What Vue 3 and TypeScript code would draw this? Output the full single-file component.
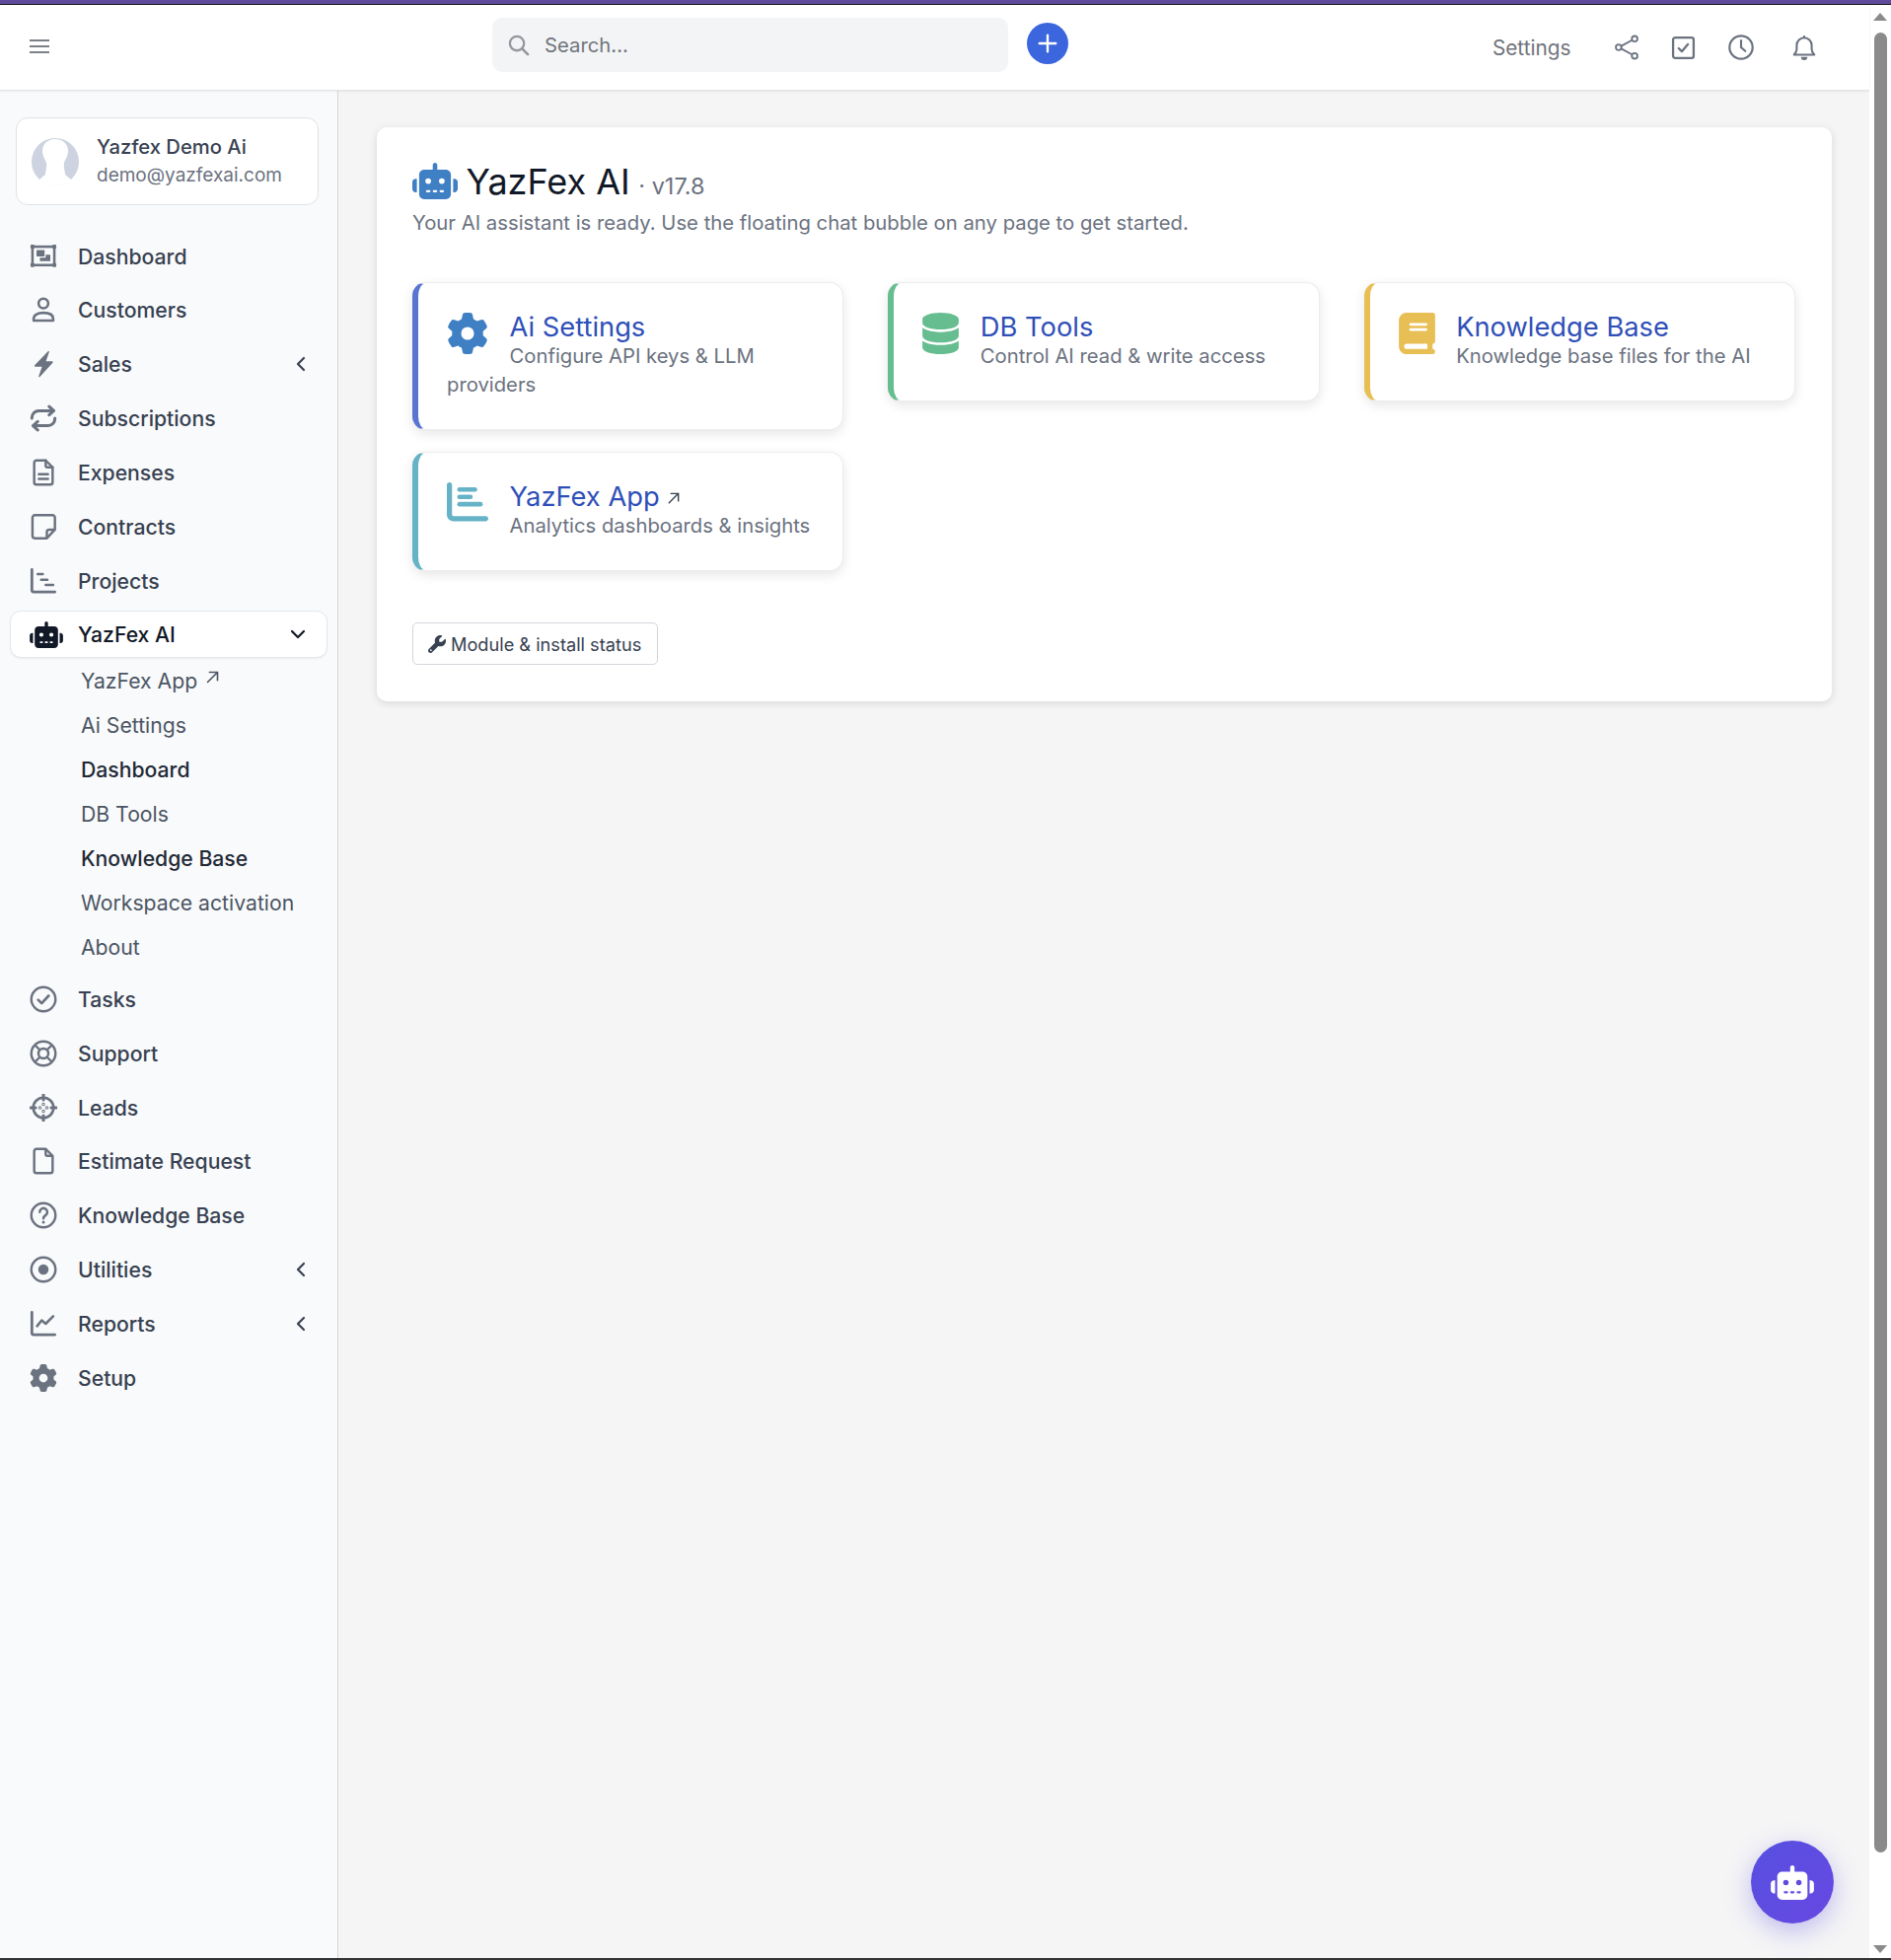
<template>
  <div class="page">
    <svg class="sprite" width="0" height="0" aria-hidden="true">
      <symbol id="i-robot" viewBox="0 0 640 512"><path fill="currentColor" d="M320 0c17.7 0 32 14.3 32 32V96H472c39.8 0 72 32.2 72 72V440c0 39.8-32.2 72-72 72H168c-39.8 0-72-32.2-72-72V168c0-39.8 32.2-72 72-72H288V32c0-17.7 14.3-32 32-32zM208 384c-8.8 0-16 7.2-16 16s7.2 16 16 16h32c8.8 0 16-7.2 16-16s-7.2-16-16-16H208zm96 0c-8.8 0-16 7.2-16 16s7.2 16 16 16h32c8.8 0 16-7.2 16-16s-7.2-16-16-16H304zm96 0c-8.8 0-16 7.2-16 16s7.2 16 16 16h32c8.8 0 16-7.2 16-16s-7.2-16-16-16H400zM264 256a40 40 0 1 0 -80 0 40 40 0 1 0 80 0zm152 40a40 40 0 1 0 0-80 40 40 0 1 0 0 80zM48 224H64V416H48c-26.5 0-48-21.5-48-48V272c0-26.5 21.5-48 48-48zm544 0c26.5 0 48 21.5 48 48v96c0 26.5-21.5 48-48 48H576V224h16z"/></symbol>
      <symbol id="i-gear" viewBox="0 0 512 512"><path fill="currentColor" d="M495.9 166.6c3.2 8.7 .5 18.4-6.4 24.6l-43.3 39.4c1.1 8.3 1.7 16.8 1.7 25.4s-.6 17.1-1.7 25.4l43.3 39.4c6.9 6.2 9.6 15.9 6.4 24.6c-4.4 11.9-9.7 23.3-15.8 34.3l-4.7 8.1c-6.6 11-14 21.4-22.1 31.2c-5.9 7.2-15.7 9.6-24.5 6.8l-55.7-17.7c-13.4 10.3-28.2 18.9-44 25.4l-12.5 57.1c-2 9.1-9 16.3-18.2 17.8c-13.8 2.3-28 3.5-42.5 3.5s-28.7-1.2-42.5-3.5c-9.2-1.5-16.2-8.7-18.2-17.8l-12.5-57.1c-15.8-6.5-30.6-15.1-44-25.4L83.1 425.9c-8.8 2.8-18.6 .3-24.5-6.8c-8.1-9.8-15.5-20.2-22.1-31.2l-4.7-8.1c-6.1-11-11.4-22.4-15.8-34.3c-3.2-8.7-.5-18.4 6.4-24.6l43.3-39.4C64.6 273.1 64 264.6 64 256s.6-17.1 1.7-25.4L22.4 191.2c-6.9-6.2-9.6-15.9-6.4-24.6c4.4-11.9 9.7-23.3 15.8-34.3l4.7-8.1c6.6-11 14-21.4 22.1-31.2c5.9-7.2 15.7-9.6 24.5-6.8l55.7 17.7c13.4-10.3 28.2-18.9 44-25.4l12.5-57.1c2-9.1 9-16.3 18.2-17.8C227.3 1.2 241.5 0 256 0s28.7 1.2 42.5 3.5c9.2 1.5 16.2 8.7 18.2 17.8l12.5 57.1c15.8 6.5 30.6 15.1 44 25.4l55.7-17.7c8.8-2.8 18.6-.3 24.5 6.8c8.1 9.8 15.5 20.2 22.1 31.2l4.7 8.1c6.1 11 11.4 22.4 15.8 34.3zM256 336a80 80 0 1 0 0-160 80 80 0 1 0 0 160z"/></symbol>
      <symbol id="i-database" viewBox="0 0 448 512"><path fill="currentColor" d="M448 80v48c0 44.2-100.3 80-224 80S0 172.2 0 128V80C0 35.8 100.3 0 224 0S448 35.8 448 80zM393.2 214.7c20.8-7.4 39.9-16.9 54.8-28.6V288c0 44.2-100.3 80-224 80S0 332.2 0 288V186.1c14.9 11.8 34 21.2 54.8 28.6C99.7 230.7 159.5 240 224 240s124.3-9.3 169.2-25.3zM0 346.1c14.9 11.8 34 21.2 54.8 28.6C99.7 390.7 159.5 400 224 400s124.3-9.3 169.2-25.3c20.8-7.4 39.9-16.9 54.8-28.6V432c0 44.2-100.3 80-224 80S0 476.2 0 432V346.1z"/></symbol>
      <symbol id="i-book" viewBox="0 0 448 512"><path fill="currentColor" d="M96 0C43 0 0 43 0 96V416c0 53 43 96 96 96H384h32c17.7 0 32-14.3 32-32s-14.3-32-32-32V384c17.7 0 32-14.3 32-32V32c0-17.7-14.3-32-32-32H384 96zm0 384H352v64H96c-17.7 0-32-14.3-32-32s14.3-32 32-32zm32-240c0-8.8 7.2-16 16-16H336c8.8 0 16 7.2 16 16s-7.2 16-16 16H144c-8.8 0-16-7.2-16-16zm16 48H336c8.8 0 16 7.2 16 16s-7.2 16-16 16H144c-8.8 0-16-7.2-16-16s7.2-16 16-16z"/></symbol>
      <symbol id="i-bars" viewBox="0 0 512 512"><g fill="currentColor"><path d="M32 0c17.7 0 32 14.3 32 32V400c0 8.8 7.2 16 16 16H480c17.7 0 32 14.3 32 32s-14.3 32-32 32H80c-44.2 0-80-35.800-80-80V32C0 14.3 14.3 0 32 0z"/><rect x="128" y="60" width="248" height="56" rx="28"/><rect x="128" y="152" width="192" height="56" rx="28"/><rect x="128" y="240" width="316" height="60" rx="30"/></g></symbol>
      <symbol id="i-wrench" viewBox="0 0 512 512"><path fill="currentColor" d="M352 320c88.4 0 160-71.6 160-160c0-15.3-2.2-30.1-6.2-44.2c-3.1-10.8-16.4-13.2-24.3-5.3l-76.8 76.8c-3 3-7.1 4.7-11.3 4.7H336c-8.8 0-16-7.2-16-16V118.6c0-4.2 1.7-8.3 4.7-11.3l76.8-76.8c7.9-7.9 5.4-21.2-5.3-24.3C382.1 2.2 367.3 0 352 0C263.6 0 192 71.6 192 160c0 19.1 3.4 37.5 9.5 54.5L19.9 396.1C7.2 408.8 0 426.1 0 444.1C0 481.6 30.4 512 67.9 512c18 0 35.3-7.2 48-19.9L297.5 310.5c17 6.2 35.4 9.5 54.5 9.5zM80 408a24 24 0 1 1 0 48 24 24 0 1 1 0-48z"/></symbol>

      <symbol id="n-dashboard" viewBox="0 0 24 24"><g fill="none" stroke="currentColor" stroke-width="2.200"><rect x="2.500" y="3.500" width="19" height="16"/></g><g fill="currentColor"><rect x=".8" y="1.800" width="3.400" height="3.400" rx=".8"/><rect x="19.800" y="1.800" width="3.400" height="3.400" rx=".8"/><rect x=".8" y="17.800" width="3.400" height="3.400" rx=".8"/><rect x="19.800" y="17.800" width="3.400" height="3.400" rx=".8"/><rect x="6" y="6.500" width="7" height="5.500" rx=".6"/><path d="M14 10.500h4v5.500h-9v-3h5z"/></g></symbol>
      <symbol id="n-user" viewBox="0 0 24 24"><g fill="none" stroke="currentColor" stroke-width="2.200" stroke-linejoin="round"><circle cx="12" cy="6.500" r="4.200"/><path d="M3.500 21.500v-1.500c0-3.200 3.100-5.300 8.500-5.300s8.500 2.100 8.500 5.300v1.500z"/></g></symbol>
      <symbol id="n-bolt" viewBox="0 0 24 24"><path fill="currentColor" d="M16.500 .8c.4 0 .7.400.5.800l-2.800 8h5.300c.7 0 1.100.800.600 1.300L8.900 23.200c-.4.500-1.200.100-1-.5l2.900-8.300H5c-.7 0-1.100-.800-.6-1.300L16 1c.1-.1.300-.2.500-.2z"/></symbol>
      <symbol id="n-repeat" viewBox="0 0 24 24"><g fill="none" stroke="currentColor" stroke-width="2.600" stroke-linecap="round" stroke-linejoin="round"><path d="M17 1.800l4 3.700-4 3.700"/><path d="M20.500 5.500H8a6 6 0 0 0-6 6v.5"/><path d="M7 22.200l-4-3.700 4-3.700"/><path d="M3.500 18.500H16a6 6 0 0 0 6-6V12"/></g></symbol>
      <symbol id="n-doc-lines" viewBox="0 0 24 24"><g fill="none" stroke="currentColor" stroke-width="2.100" stroke-linejoin="round" stroke-linecap="round"><path d="M14 1.500H6a2 2 0 0 0-2 2v17a2 2 0 0 0 2 2h12a2 2 0 0 0 2-2V7.500z"/><path d="M14 1.500v4.500a1.500 1.500 0 0 0 1.500 1.500H20"/><path d="M8 13.500h8M8 17.500h8"/></g></symbol>
      <symbol id="n-note" viewBox="0 0 24 24"><g fill="none" stroke="currentColor" stroke-width="2.100" stroke-linejoin="round"><path d="M22 14.500V4a2 2 0 0 0-2-2H4.500a2 2 0 0 0-2 2v16a2 2 0 0 0 2 2H15z"/><path d="M15 22v-5.500a2 2 0 0 1 2-2h5"/></g></symbol>
      <symbol id="n-gantt" viewBox="0 0 24 24"><g fill="none" stroke="currentColor" stroke-linecap="round"><path stroke-width="2.400" d="M2 2v18a1.500 1.500 0 0 0 1.500 1.500H22"/><path stroke-width="2.100" d="M7 6h4.500M10 11h5.500M14 15.500h6.500"/></g></symbol>
      <symbol id="n-check" viewBox="0 0 24 24"><g fill="none" stroke="currentColor" stroke-width="2.100" stroke-linecap="round" stroke-linejoin="round"><circle cx="12" cy="12" r="10.500"/><path d="M7.500 12.500l3 3 6-6.500" stroke-width="2.300"/></g></symbol>
      <symbol id="n-lifebuoy" viewBox="0 0 24 24"><g fill="none" stroke="currentColor" stroke-width="2.100"><circle cx="12" cy="12" r="10.500"/><circle cx="12" cy="12" r="4.300"/><path d="M4.500 4.500l4.500 4.500M19.500 4.500L15 9M4.500 19.500L9 15M19.500 19.500L15 15"/></g></symbol>
      <symbol id="n-crosshair" viewBox="0 0 24 24"><g fill="none" stroke="currentColor" stroke-width="2.200" stroke-linecap="round"><circle cx="12" cy="12" r="8.800"/><path d="M12 .8v4.400M12 18.800v4.400M.8 12h4.400M18.800 12h4.400" stroke-width="2.600"/><circle cx="12" cy="9" r=".4"/><circle cx="12" cy="15" r=".4"/><circle cx="9" cy="12" r=".4"/><circle cx="15" cy="12" r=".4"/></g></symbol>
      <symbol id="n-doc" viewBox="0 0 24 24"><g fill="none" stroke="currentColor" stroke-width="2.100" stroke-linejoin="round"><path d="M14 1.500H6a2 2 0 0 0-2 2v17a2 2 0 0 0 2 2h12a2 2 0 0 0 2-2V7.500z"/><path d="M14 1.500v4.500a1.500 1.500 0 0 0 1.500 1.500H20"/></g></symbol>
      <symbol id="n-question" viewBox="0 0 24 24"><g fill="none" stroke="currentColor" stroke-width="2.100" stroke-linecap="round"><circle cx="12" cy="12" r="10.500"/><path d="M8.800 9.200a3.300 3.300 0 1 1 5.200 2.700c-1.200.8-2 1.400-2 2.800"/></g><circle cx="12" cy="18" r="1.300" fill="currentColor"/></symbol>
      <symbol id="n-dot" viewBox="0 0 24 24"><circle cx="12" cy="12" r="10.500" fill="none" stroke="currentColor" stroke-width="2.100"/><circle cx="12" cy="12" r="4.500" fill="currentColor"/></symbol>
      <symbol id="n-chart" viewBox="0 0 24 24"><g fill="none" stroke="currentColor" stroke-linecap="round" stroke-linejoin="round"><path stroke-width="2.400" d="M2 2v18a1.500 1.500 0 0 0 1.500 1.500H22"/><path stroke-width="2.200" d="M6.500 14l4-5 3.500 3 6.500-6.500"/></g></symbol>
    </svg>

    <div class="stripe"></div>
    <div class="frame">
      <div class="app">
        <header class="topbar">
          <button class="burger" aria-label="Menu">
            <span></span><span></span><span></span>
          </button>
          <div class="search">
            <svg class="search-icon" viewBox="0 0 24 24"><circle cx="10.500" cy="10.500" r="7.500" fill="none" stroke="currentColor" stroke-width="2.400"/><path d="M16 16l6 6" stroke="currentColor" stroke-width="2.800" stroke-linecap="round"/></svg>
            <span>Search...</span>
          </div>
          <button class="plus" aria-label="Add">
            <svg viewBox="0 0 24 24"><path d="M12 3v18M3 12h18" stroke="#fff" stroke-width="2.600" stroke-linecap="round"/></svg>
          </button>
          <div class="top-right">
            <span class="top-settings">Settings</span>
            <svg class="top-icon share" viewBox="0 0 24 24"><g fill="none" stroke="currentColor" stroke-width="1.700"><circle cx="19.500" cy="4" r="2.600"/><circle cx="4.500" cy="12" r="2.600"/><circle cx="19.500" cy="20" r="2.600"/><path d="M7 10.700l10-5.400M7 13.300l10 5.400"/></g></svg>
            <svg class="top-icon todo" viewBox="0 0 24 24"><g fill="none" stroke="currentColor" stroke-linejoin="round" stroke-linecap="round"><rect x="2" y="2" width="20" height="20" rx="2" stroke-width="2.200"/><path d="M7.500 12.500l3 3 6-7" stroke-width="2.200"/></g></svg>
            <svg class="top-icon clock" viewBox="0 0 24 24"><g fill="none" stroke="currentColor" stroke-width="2" stroke-linecap="round"><circle cx="12" cy="12" r="10.800"/><path d="M12 5.500V12l4 3.500"/></g></svg>
            <svg class="top-icon bell" viewBox="0 0 24 24"><g fill="none" stroke="currentColor" stroke-width="1.900" stroke-linejoin="round"><path d="M12 3a7 7 0 0 0-7 7v3.500c0 2.500-1 4-2.500 5.500h19c-1.500-1.500-2.500-3-2.500-5.500V10a7 7 0 0 0-7-7z"/><path d="M12 1v2"/></g><path d="M9 21h6a3 3 0 0 1-6 0z" fill="currentColor"/></svg>
          </div>
        </header>

        <div class="body">
          <aside class="sidebar">
            <div class="profile">
              <svg class="avatar" viewBox="0 0 48 48"><circle cx="24" cy="24" r="24" fill="#cdd3e0"/><path d="M24 1C16 1 11 6 11 13c0 5 3 9 4 12 1 4-1 8-1 12-2 2-4 3-6 5 4 4 10 6 16 6s12-2 16-6c-2-2-4-3-6-5 0-4-2-8-1-12 1-3 4-7 4-12C37 6 32 1 24 1z" fill="#fff"/></svg>
              <div class="profile-text">
                <div class="profile-name">Yazfex Demo Ai</div>
                <div class="profile-mail">demo@yazfexai.com</div>
              </div>
            </div>

            <nav class="nav">
              <template v-for="item in navItems" :key="item.label">
                <a class="nav-item" :class="{ active: item.children }">
                  <span class="nav-icon">
                    <svg :class="item.icon === 'i-robot' ? 'robot' : 'glyph'"><use :href="'#' + item.icon" /></svg>
                  </span>
                  <span class="nav-label">{{ item.label }}</span>
                  <svg v-if="item.caret" class="caret" viewBox="0 0 12 16"><path d="M9 2L3 8l6 6" fill="none" stroke="currentColor" stroke-width="2.200" stroke-linecap="round" stroke-linejoin="round"/></svg>
                  <svg v-if="item.children" class="caret-down" viewBox="0 0 16 12"><path d="M2 3l6 6 6-6" fill="none" stroke="currentColor" stroke-width="2.200" stroke-linecap="round" stroke-linejoin="round"/></svg>
                </a>
                <ul v-if="item.children" class="sub">
                  <li v-for="child in item.children" :key="child.label" :class="{ strong: child.strong }">
                    {{ child.label }}
                    <svg v-if="child.external" class="ext" viewBox="0 0 12 12"><path d="M2 10L10 2M3.500 2H10v6.500" fill="none" stroke="currentColor" stroke-width="1.300" stroke-linecap="round"/></svg>
                  </li>
                </ul>
              </template>
            </nav>
          </aside>

          <main class="content">
            <section class="panel">
              <h1 class="title">
                <svg class="title-icon"><use href="#i-robot" /></svg>
                <span>YazFex AI</span>
                <small>· v17.8</small>
              </h1>
              <p class="lead">Your AI assistant is ready. Use the floating chat bubble on any page to get started.</p>

              <div class="cards">
                <a v-for="card in cards" :key="card.title" class="card" :class="card.tone">
                  <svg class="card-icon" :style="{ width: card.iconWidth + 'px' }"><use :href="'#' + card.icon" /></svg>
                  <div class="card-title">
                    {{ card.title }}
                    <svg v-if="card.external" class="card-ext" viewBox="0 0 12 12"><path d="M2 10L10 2M3.500 2H10v6.500" fill="none" stroke="currentColor" stroke-width="1.200" stroke-linecap="round"/></svg>
                  </div>
                  <span class="card-desc">{{ card.desc }}</span>
                </a>
              </div>

              <button class="status-btn">
                <svg><use href="#i-wrench" /></svg>
                Module &amp; install status
              </button>
            </section>
          </main>
        </div>
      </div>

      <div class="scrollbar">
        <span class="arrow up"></span>
        <span class="thumb"></span>
        <span class="arrow down"></span>
      </div>
    </div>
    <div class="baseline"></div>

    <button class="chat-bubble" aria-label="Chat">
      <svg><use href="#i-robot" /></svg>
    </button>
  </div>
</template>

<script setup lang="ts">
interface SubItem {
  label: string;
  strong?: boolean;
  external?: boolean;
}

interface NavItem {
  label: string;
  icon: string;
  caret?: boolean;
  children?: SubItem[];
}

interface Card {
  title: string;
  desc: string;
  icon: string;
  iconWidth: number;
  tone: string;
  external?: boolean;
}

const navItems: NavItem[] = [
  { label: 'Dashboard', icon: 'n-dashboard' },
  { label: 'Customers', icon: 'n-user' },
  { label: 'Sales', icon: 'n-bolt', caret: true },
  { label: 'Subscriptions', icon: 'n-repeat' },
  { label: 'Expenses', icon: 'n-doc-lines' },
  { label: 'Contracts', icon: 'n-note' },
  { label: 'Projects', icon: 'n-gantt' },
  {
    label: 'YazFex AI',
    icon: 'i-robot',
    children: [
      { label: 'YazFex App', external: true },
      { label: 'Ai Settings' },
      { label: 'Dashboard', strong: true },
      { label: 'DB Tools' },
      { label: 'Knowledge Base', strong: true },
      { label: 'Workspace activation' },
      { label: 'About' },
    ],
  },
  { label: 'Tasks', icon: 'n-check' },
  { label: 'Support', icon: 'n-lifebuoy' },
  { label: 'Leads', icon: 'n-crosshair' },
  { label: 'Estimate Request', icon: 'n-doc' },
  { label: 'Knowledge Base', icon: 'n-question' },
  { label: 'Utilities', icon: 'n-dot', caret: true },
  { label: 'Reports', icon: 'n-chart', caret: true },
  { label: 'Setup', icon: 'i-gear' },
];

const cards: Card[] = [
  { title: 'Ai Settings', desc: 'Configure API keys & LLM providers', icon: 'i-gear', iconWidth: 42, tone: 'blue' },
  { title: 'DB Tools', desc: 'Control AI read & write access', icon: 'i-database', iconWidth: 37, tone: 'green' },
  { title: 'Knowledge Base', desc: 'Knowledge base files for the AI', icon: 'i-book', iconWidth: 37, tone: 'yellow' },
  { title: 'YazFex App', desc: 'Analytics dashboards & insights', icon: 'i-bars', iconWidth: 42, tone: 'teal', external: true },
];
</script>

<style>
html,
body {
  margin: 0;
  overflow: hidden;
}
</style>

<style scoped>
* {
  box-sizing: border-box;
}

.page {
  position: relative;
  display: flex;
  flex-direction: column;
  width: 1917px;
  height: 1987px;
  overflow: hidden;
  font-family: Inter, "Liberation Sans", sans-serif;
  background: #fff;
}

.sprite {
  position: absolute;
}

.stripe {
  height: 5px;
  flex: none;
  background: #5f4b9b;
  border-bottom: 1.5px solid #16161f;
}

.baseline {
  height: 2px;
  flex: none;
  background: #333;
}

.frame {
  flex: 1;
  display: flex;
  min-height: 0;
}

.app {
  flex: 1;
  display: flex;
  flex-direction: column;
  min-width: 0;
}

/* top bar */
.topbar {
  height: 87px;
  flex: none;
  display: flex;
  align-items: center;
  background: #fff;
  border-bottom: 1px solid #e2e3e6;
  box-shadow: 0 1px 3px rgba(0, 0, 0, 0.06);
  position: relative;
  z-index: 1;
}

.burger {
  margin-left: 30px;
  margin-top: -2px;
  width: 20px;
  height: 14px;
  padding: 0;
  border: 0;
  background: none;
  display: flex;
  flex-direction: column;
  justify-content: space-between;
}

.burger span {
  height: 2px;
  background: #7b8089;
}

.search {
  margin-left: 449px;
  margin-top: -5px;
  width: 523px;
  height: 55px;
  display: flex;
  align-items: center;
  gap: 15px;
  padding-left: 15px;
  background: #f3f4f6;
  border-radius: 10px;
  color: #71757c;
  font-size: 20.3px;
}

.search-icon {
  width: 23px;
  height: 23px;
  color: #94979d;
}

.plus {
  margin-left: 19px;
  margin-top: -9px;
  width: 42px;
  height: 42px;
  padding: 10px;
  border: 0;
  border-radius: 50%;
  background: #3b66dd;
  display: flex;
}

.top-right {
  margin-left: auto;
  display: flex;
  align-items: center;
  padding-right: 53px;
  color: #6b7280;
}

.top-settings {
  font-size: 20.8px;
  color: #6f747c;
  margin-right: 43px;
}

.top-icon {
  width: 26px;
  height: 26px;
}

.todo {
  width: 25px;
  height: 25px;
  margin-left: 32.5px;
}

.clock {
  margin-left: 33px;
}

.bell {
  margin-left: 38px;
}

/* sidebar */
.body {
  flex: 1;
  display: flex;
  min-height: 0;
}

.sidebar {
  width: 343px;
  flex: none;
  padding: 27px 0 0 0;
  background: #f9fafb;
  border-right: 1px solid #d4d5d8;
}

.profile {
  margin-left: 16px;
  width: 307px;
  height: 89px;
  display: flex;
  align-items: center;
  gap: 18px;
  padding-left: 15px;
  background: #fff;
  border: 1px solid #e0e2e6;
  border-radius: 12px;
}

.avatar {
  width: 48px;
  height: 48px;
  flex: none;
}

.profile-name {
  font-size: 20.2px;
  font-weight: 500;
  line-height: 28px;
  color: #374151;
}

.profile-mail {
  font-size: 19px;
  line-height: 29px;
  color: #6b7280;
}

.nav {
  margin-top: 27.5px;
}

.nav-item {
  height: 48px;
  margin: 0 10px 6.85px;
  width: 322px;
  display: flex;
  align-items: center;
  padding-left: 19px;
  border: 1px solid transparent;
  border-radius: 11px;
  font-size: 21.2px;
  font-weight: 500;
  color: #374151;
}

.nav-item.active {
  background: #fff;
  border-color: #e5e7eb;
  color: #111827;
  box-shadow: 0 1px 2px rgba(0, 0, 0, 0.05);
}

.nav-icon {
  width: 49px;
  display: flex;
  flex: none;
  color: #6b7280;
}

.nav-item.active .nav-icon {
  color: #111827;
}

.glyph {
  width: 28px;
  height: 28px;
}

.robot {
  width: 34px;
  height: 27px;
}

.caret {
  margin-left: auto;
  margin-right: 20px;
  width: 12px;
  height: 16px;
  color: #374151;
}

.caret-down {
  margin-left: auto;
  margin-right: 21px;
  width: 16px;
  height: 12px;
  color: #111827;
}

.sub {
  list-style: none;
  margin: -6.8px 0 6.5px;
  padding: 0 0 0 82px;
}

.sub li {
  height: 45px;
  display: flex;
  align-items: center;
  gap: 8px;
  font-size: 21.2px;
  color: #4b5563;
}

.sub li.strong {
  font-weight: 500;
  color: #1f2937;
}

.ext {
  width: 15px;
  height: 15px;
  margin-top: -6px;
}

/* content */
.content {
  flex: 1;
  min-width: 0;
  padding: 37px 38px 0 39px;
  background: #f5f5f6;
}

.panel {
  padding: 36px 37px 37px 36px;
  background: #fff;
  border-radius: 10px;
  box-shadow: 0 2px 8px rgba(0, 0, 0, 0.12);
}

.title {
  margin: 0;
  height: 37px;
  display: flex;
  align-items: center;
  gap: 8.5px;
  font-size: 36px;
  font-weight: 400;
  color: #111827;
}

.title-icon {
  width: 46px;
  height: 37px;
  color: #3f7fc4;
}

.title small {
  font-size: 23.5px;
  color: #6b7280;
  align-self: flex-end;
  margin-bottom: -1px;
}

.lead {
  margin: 10px 0 46px;
  font-size: 20.3px;
  line-height: 28px;
  color: #6b7280;
}

.cards {
  display: grid;
  grid-template-columns: repeat(3, 1fr);
  gap: 22px 45px;
  align-items: start;
}

.card {
  display: block;
  padding: 30px 29px 31px;
  background: #fff;
  border: 1px solid #ececee;
  border-left: 6px solid;
  border-radius: 14px;
  box-shadow: 0 4px 12px rgba(0, 0, 0, 0.1);
}

.card-icon {
  float: left;
  height: 42px;
  margin-right: 21.5px;
}

.card-title {
  font-size: 27.3px;
  line-height: 29px;
  color: #2f4fb8;
}

.card-ext {
  width: 14px;
  height: 14px;
  margin-left: 0;
  margin-bottom: 1px;
  color: #374151;
}

.card-desc {
  font-size: 20.25px;
  line-height: 29px;
  color: #6b7280;
}

.card.blue { border-left-color: #5a75d0; }
.card.blue .card-icon { color: #3f7fc4; }
.card.green { border-left-color: #66bd8f; }
.card.green .card-icon { color: #66bd8f; }
.card.yellow { border-left-color: #e8bf54; }
.card.yellow .card-icon { color: #e8bf54; }
.card.teal { border-left-color: #66b2c6; }
.card.teal .card-icon { color: #66b2c6; }

.status-btn {
  margin-top: 52px;
  height: 43px;
  display: flex;
  align-items: center;
  gap: 5px;
  padding: 0 16px 0 15px;
  background: #fff;
  border: 1px solid #d1d5db;
  border-radius: 5px;
  font-family: inherit;
  font-size: 18.2px;
  color: #374151;
}

.status-btn svg {
  width: 18px;
  height: 18px;
}

/* fake scrollbar */
.scrollbar {
  width: 22px;
  flex: none;
  display: flex;
  flex-direction: column;
  align-items: center;
  background: #fff;
  padding-top: 8px;
}

.thumb {
  flex: 1;
  width: 13px;
  margin: 12px 0 94px;
  background: #8a8a8a;
  border-radius: 7px;
}

.arrow {
  width: 0;
  height: 0;
  border-left: 7px solid transparent;
  border-right: 7px solid transparent;
}

.arrow.up {
  border-bottom: 8px solid #8a8a8a;
}

.arrow.down {
  border-top: 8px solid #8a8a8a;
  margin-bottom: 5px;
}

/* chat */
.chat-bubble {
  position: absolute;
  left: 1775px;
  top: 1866px;
  width: 84px;
  height: 84px;
  padding: 0;
  border: 0;
  border-radius: 50%;
  display: flex;
  align-items: center;
  justify-content: center;
  color: #fff;
  background: linear-gradient(135deg, #5650e0, #6848e2);
  box-shadow: 0 8px 26px rgba(90, 80, 224, 0.35);
}

.chat-bubble svg {
  width: 44px;
  height: 35px;
}
</style>
